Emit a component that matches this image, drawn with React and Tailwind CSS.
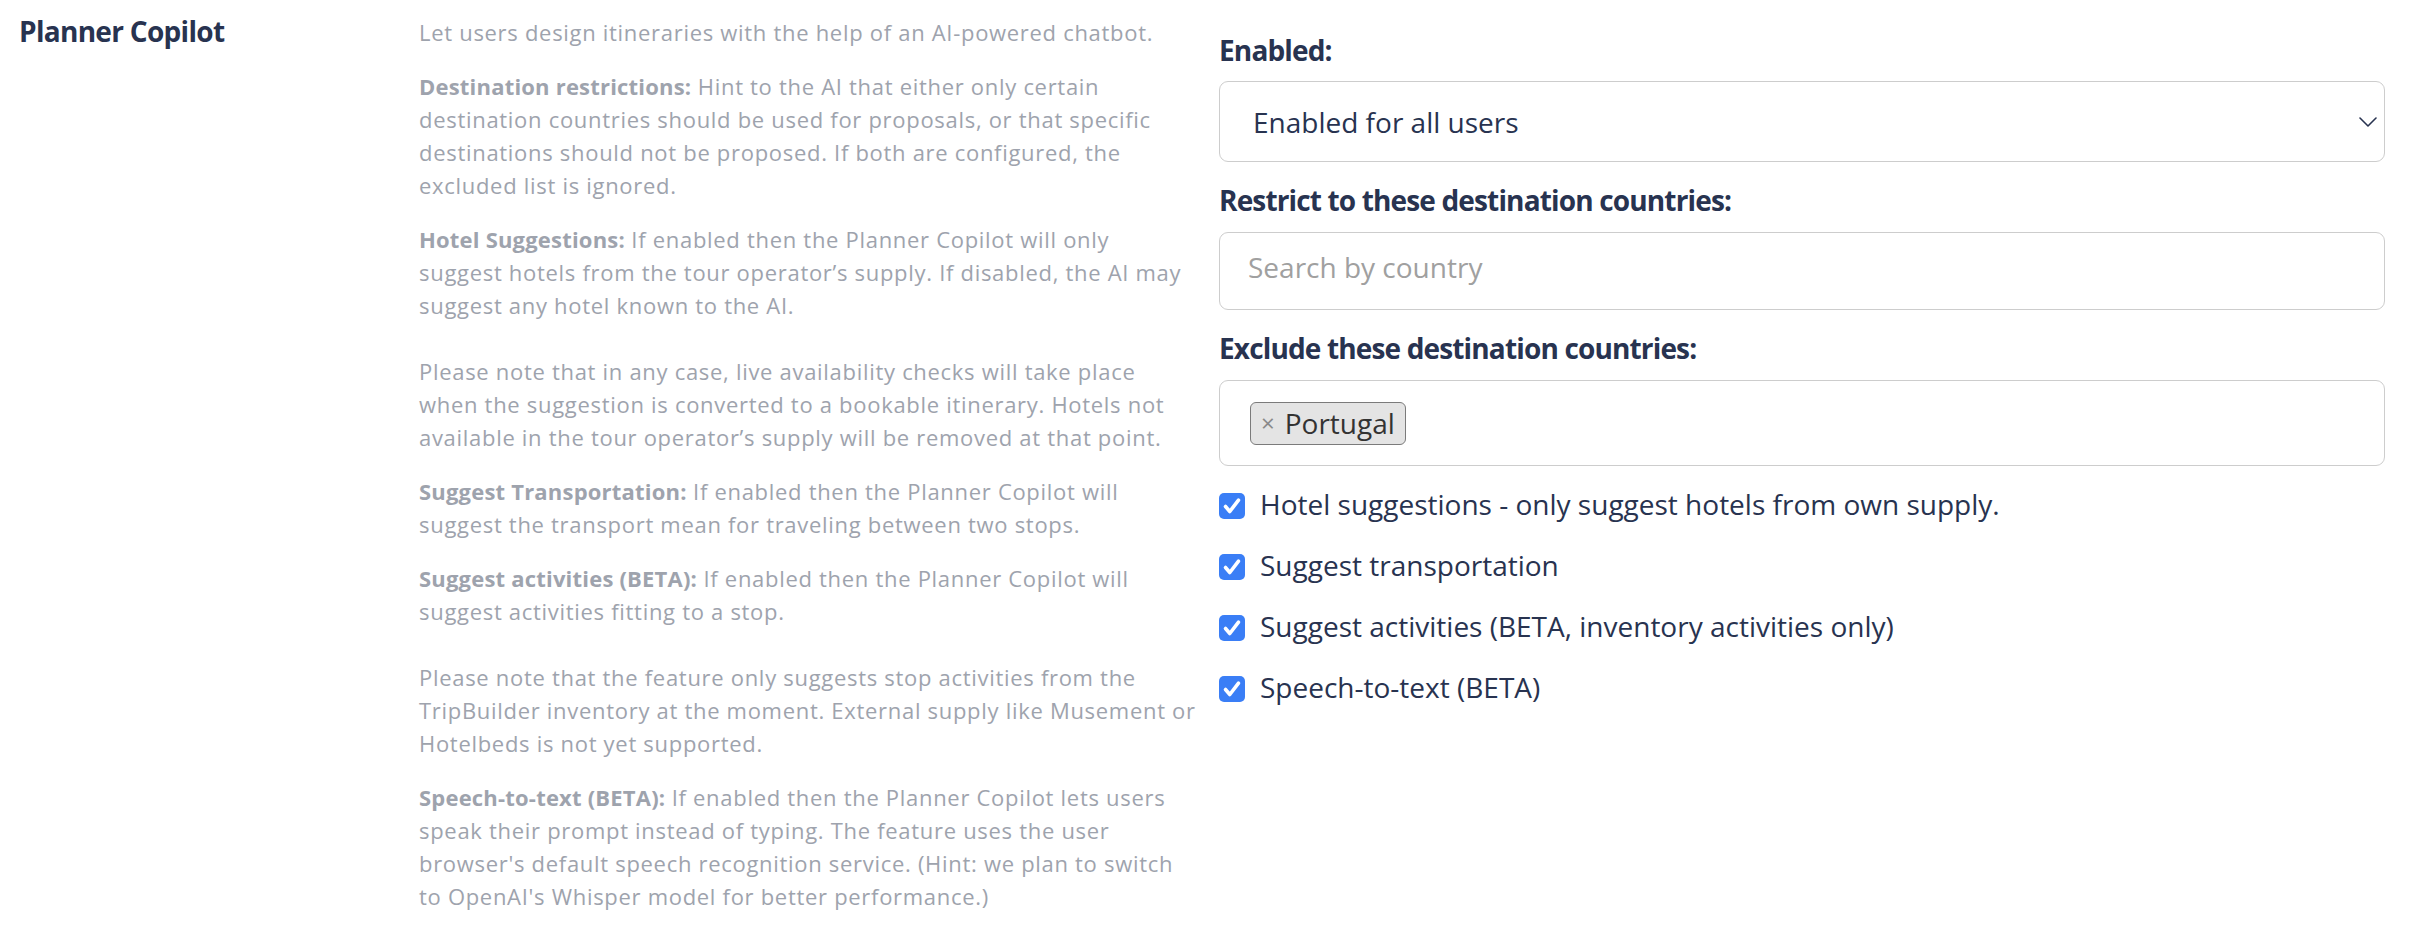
import { useState } from 'react';

const descParagraphs = [
  { lines: ['Let users design itineraries with the help of an AI-powered chatbot.'] },
  {
    bold: 'Destination restrictions:',
    lines: [
      ' Hint to the AI that either only certain',
      'destination countries should be used for proposals, or that specific',
      'destinations should not be proposed. If both are configured, the',
      'excluded list is ignored.',
    ],
  },
  {
    bold: 'Hotel Suggestions:',
    lines: [
      ' If enabled then the Planner Copilot will only',
      'suggest hotels from the tour operator\u2019s supply. If disabled, the AI may',
      'suggest any hotel known to the AI.',
      '',
      'Please note that in any case, live availability checks will take place',
      'when the suggestion is converted to a bookable itinerary. Hotels not',
      'available in the tour operator\u2019s supply will be removed at that point.',
    ],
  },
  {
    bold: 'Suggest Transportation:',
    lines: [
      ' If enabled then the Planner Copilot will',
      'suggest the transport mean for traveling between two stops.',
    ],
  },
  {
    bold: 'Suggest activities (BETA):',
    lines: [
      ' If enabled then the Planner Copilot will',
      'suggest activities fitting to a stop.',
      '',
      'Please note that the feature only suggests stop activities from the',
      'TripBuilder inventory at the moment. External supply like Musement or',
      'Hotelbeds is not yet supported.',
    ],
  },
  {
    bold: 'Speech-to-text (BETA):',
    lines: [
      ' If enabled then the Planner Copilot lets users',
      'speak their prompt instead of typing. The feature uses the user',
      "browser's default speech recognition service. (Hint: we plan to switch",
      "to OpenAI's Whisper model for better performance.)",
    ],
  },
];

const options = [
  { key: 'hotels', label: 'Hotel suggestions - only suggest hotels from own supply.' },
  { key: 'transport', label: 'Suggest transportation' },
  { key: 'activities', label: 'Suggest activities (BETA, inventory activities only)' },
  { key: 'speech', label: 'Speech-to-text (BETA)' },
];

const Check = ({ checked, onClick }) => (
  <button
    onClick={onClick}
    className={`w-[26px] h-[26px] shrink-0 rounded-[5px] flex items-center justify-center ${checked ? 'bg-[#3a7ef6]' : 'bg-white border-2 border-[#9ca3af]'}`}
  >
    {checked && (
      <svg width="26" height="26" viewBox="0 0 26 26" fill="none">
        <path d="M6.5 13.5 L10.8 18.5 L19.5 7.2" stroke="white" strokeWidth="3.6" strokeLinecap="round" strokeLinejoin="round" />
      </svg>
    )}
  </button>
);

const App = () => {
  const [checks, setChecks] = useState({ hotels: true, transport: true, activities: true, speech: true });
  const [excluded, setExcluded] = useState(['Portugal']);

  return (
    <div className="w-[2416px] h-[936px] bg-white flex pl-[19px] pr-[31px] pt-[16px] font-['Open_Sans',sans-serif] overflow-hidden">
      {/* Title */}
      <div className="w-[400px] shrink-0">
        <h2 className="text-[28px] leading-[30px] font-bold tracking-[-0.7px] text-[#283350]">Planner Copilot</h2>
      </div>

      {/* Description */}
      <div className="w-[770px] shrink-0 text-[22px] leading-[33px] tracking-[0.7px] text-[#9ea3ad] space-y-[21px]">
        {descParagraphs.map((p, i) => (
          <p key={i} className="whitespace-nowrap">
            {p.bold && <span className="font-bold tracking-[0.2px]">{p.bold}</span>}
            {p.lines.map((l, j) => (
              <span key={j}>
                {j > 0 && <br />}
                {l}
              </span>
            ))}
          </p>
        ))}
      </div>

      {/* Settings */}
      <div className="flex-1 ml-[30px] pt-[13px] text-[#283350]">
        <label className="block text-[28px] leading-[42px] font-bold tracking-[-0.85px] mb-[10px]">Enabled:</label>
        <div className="h-[81px] border-[1.5px] border-[#cdcdcd] rounded-[9px] flex items-center justify-between pl-[33px] pr-[7px]">
          <span className="text-[28px]">Enabled for all users</span>
          <svg width="18" height="10" viewBox="0 0 18 10" fill="none">
            <path d="M1 1 L9 9 L17 1" stroke="#283350" strokeWidth="1.6" strokeLinecap="round" strokeLinejoin="round" />
          </svg>
        </div>

        <label className="block text-[28px] leading-[42px] font-bold tracking-[-0.85px] mt-[17px] mb-[11px]">Restrict to these destination countries:</label>
        <div className="h-[78px] border-[1.5px] border-[#cdcdcd] rounded-[9px] flex items-center pl-[28px] pb-[9px]">
          <input
            placeholder="Search by country"
            className="w-full outline-none text-[28px] text-[#283350] placeholder:text-[#a0a0a0] bg-transparent"
          />
        </div>

        <label className="block text-[28px] leading-[42px] font-bold tracking-[-0.85px] mt-[17px] mb-[11px]">Exclude these destination countries:</label>
        <div className="h-[86px] border-[1.5px] border-[#cdcdcd] rounded-[9px] flex items-center pl-[30px] gap-2">
          {excluded.map(c => (
            <span key={c} className="h-[43px] flex items-center gap-[10px] px-[10px] bg-[#e4e4e4] border-[1.5px] border-[#7b7b7b] rounded-[6px] text-[28px] text-[#333333]">
              <button onClick={() => setExcluded(excluded.filter(x => x !== c))} className="text-[#8a8a8a] text-[24px] leading-none">×</button>
              {c}
            </span>
          ))}
        </div>

        <div className="mt-[18.5px] flex flex-col gap-[19px]">
          {options.map(o => (
            <div key={o.key} className="h-[42px] flex items-center gap-[15px]">
              <Check checked={checks[o.key]} onClick={() => setChecks({ ...checks, [o.key]: !checks[o.key] })} />
              <span className="text-[28px] leading-[42px] -mt-[3px]">{o.label}</span>
            </div>
          ))}
        </div>
      </div>
    </div>
  );
};

export default App;
